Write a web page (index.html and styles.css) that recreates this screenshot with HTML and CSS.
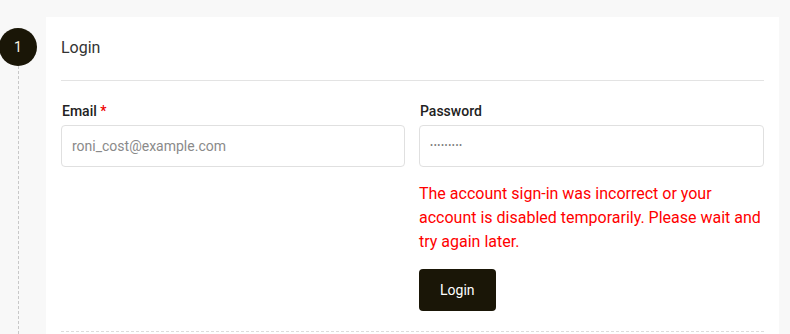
FILE: index.html
```html
<!DOCTYPE html>
<html lang="en">
<head>
<meta charset="utf-8">
<title>Login</title>
<link rel="stylesheet" href="styles.css">
</head>
<body>
<div class="page">
  <div class="rail">
    <div class="step">1</div>
    <div class="rail-line"></div>
  </div>
  <div class="card">
    <div class="card-head">Login</div>
    <form class="form">
      <div class="field">
        <label class="label">Email <span class="req">*</span></label>
        <input class="input" type="email" placeholder="roni_cost@example.com">
      </div>
      <div class="field">
        <label class="label">Password</label>
        <input class="input pw" type="text" placeholder="•••••••••">
        <p class="error">The account sign-in was incorrect or your account is disabled temporarily. Please wait and try again later.</p>
        <div><button type="button" class="btn">Login</button></div>
      </div>
    </form>
    <div class="card-foot"></div>
  </div>
</div>
</body>
</html>
```
FILE: styles.css
```css
* { box-sizing: border-box; }
html, body { margin: 0; padding: 0; }
body {
  background: #f8f8f8;
  font-family: Roboto, "Liberation Sans", sans-serif;
  color: #222;
  height: 334px;
  overflow: hidden;
}
.page {
  display: flex;
  align-items: flex-start;
}
.rail {
  width: 46px;
  flex: none;
  display: flex;
  flex-direction: column;
  padding-top: 28px;
  height: 334px;
}
.step {
  width: 38px;
  height: 38px;
  margin-left: -1px;
  border-radius: 50%;
  background: #1a1607;
  color: #fbf3e2;
  font-size: 14px;
  display: flex;
  align-items: center;
  justify-content: center;
}
.rail-line {
  flex: 1;
  margin-left: 18px;
  border-left: 1px dashed #c8c8c8;
}
.card {
  margin-top: 17px;
  width: 733px;
  background: #fff;
  padding: 0 15px;
  min-height: 330px;
}
.card-head {
  height: 64px;
  line-height: 24px;
  padding-top: 19px;
  font-size: 16px;
  color: #333;
  border-bottom: 1px solid #e3e3e3;
}
.form {
  display: grid;
  grid-template-columns: 344px 345px;
  column-gap: 14px;
  padding-top: 20px;
}
.field { display: flex; flex-direction: column; }
.label {
  font-size: 14px;
  font-weight: 500;
  line-height: 20px;
  margin-bottom: 4px;
  padding-left: 1px;
  color: #222;
}
.req { color: #e00; }
.input {
  height: 42px;
  border: 1px solid #e0e0e0;
  border-radius: 4px;
  padding: 0 10px;
  font-family: inherit;
  font-size: 14px;
  color: #333;
  outline: none;
}
.input::placeholder { color: #8a8a8a; }
.pw { padding-bottom: 6px; }
.pw::placeholder { color: #7a7a7a; font-size: 9px; letter-spacing: 0.6px; }
.error {
  margin: 15px 0 0;
  color: #ff0000;
  font-size: 16px;
  line-height: 24px;
}
.btn {
  margin-top: 15px;
  height: 42px;
  padding: 0 21px;
  border: none;
  border-radius: 4px;
  background: #1a1607;
  color: #fff;
  font-family: inherit;
  font-size: 14px;
}
.card-foot {
  margin-top: 20px;
  border-top: 1px dashed #dcdcdc;
}
```
